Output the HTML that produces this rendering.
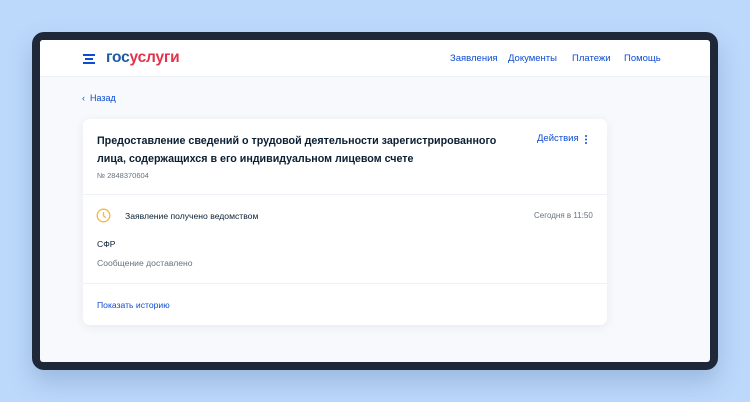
<!DOCTYPE html>
<html><head><meta charset="utf-8"><style>
*{margin:0;padding:0;box-sizing:border-box}
body{width:750px;height:402px;background:#bcd9fb;font-family:"Liberation Sans",sans-serif;position:relative;overflow:hidden}
.frame{position:absolute;left:32px;top:32px;width:686px;height:338px;background:#1f2838;border-radius:12px;box-shadow:0 12px 24px rgba(60,90,140,.25)}
.screen{position:absolute;left:40px;top:40px;width:670px;height:322px;background:#f7f9fc;border-radius:3px;overflow:hidden}
.hdr{height:37px;background:#fff;border-bottom:1px solid #eef1f6;position:relative}
.a{position:absolute;font-size:9.5px;color:#0d4cd3}
.card{position:absolute;left:43px;top:79px;width:524px;height:206px;background:#fff;border-radius:7px;box-shadow:0 2px 10px rgba(40,70,120,.08)}
.t{position:absolute;font-size:8.6px;color:#0b1f33}
</style></head><body>
<div class="frame"></div>
<div class="screen">
 <div class="hdr">
  <div style="position:absolute;left:43px;top:14px;width:12px;height:1.5px;background:#0d4cd3"></div>
  <div style="position:absolute;left:45px;top:18px;width:8px;height:1.5px;background:#0d4cd3"></div>
  <div style="position:absolute;left:43px;top:22px;width:12px;height:1.5px;background:#0d4cd3"></div>
  <div style="position:absolute;left:66px;top:9px;font-size:15.5px;font-weight:bold;letter-spacing:-0.2px"><span style="color:#1d5aa8">гос</span><span style="color:#e3324c">услуги</span></div>
  <span class="a" style="left:410px;top:13px">Заявления</span>
  <span class="a" style="left:468px;top:13px">Документы</span>
  <span class="a" style="left:532px;top:13px">Платежи</span>
  <span class="a" style="left:584px;top:13px">Помощь</span>
 </div>
 <span class="a" style="left:42px;top:53px;font-size:9px">‹&nbsp; Назад</span>
 <div class="card">
  <div style="position:absolute;left:14px;top:13px;font-size:10.7px;font-weight:bold;color:#0b1f33;line-height:18px;width:430px">Предоставление сведений о трудовой деятельности зарегистрированного лица, содержащихся в его индивидуальном лицевом счете</div>
  <span class="a" style="left:454px;top:14px;font-size:9.5px">Действия</span>
  <div style="position:absolute;left:502px;top:16px;width:2px;height:2px;background:#0d4cd3;border-radius:1px;box-shadow:0 3.5px 0 #0d4cd3,0 7px 0 #0d4cd3"></div>
  <span class="t" style="left:14px;top:52px;color:#66727f;font-size:7.5px">№ 2848370604</span>
  <div style="position:absolute;left:0;top:75px;width:524px;height:1px;background:#eef1f6"></div>
  <svg style="position:absolute;left:13px;top:89px" width="15" height="15" viewBox="0 0 15 15"><circle cx="7.5" cy="7.5" r="6.3" fill="none" stroke="#f4b73c" stroke-width="1.3"/><path d="M7.5 4v3.8l2.3 1.8" fill="none" stroke="#f4b73c" stroke-width="1.3"/></svg>
  <span class="t" style="left:42px;top:92px">Заявление получено ведомством</span>
  <span class="t" style="left:451px;top:92px;color:#66727f;font-size:8px">Сегодня в 11:50</span>
  <span class="t" style="left:14px;top:120px">СФР</span>
  <span class="t" style="left:14px;top:139px;color:#66727f">Сообщение доставлено</span>
  <div style="position:absolute;left:0;top:164px;width:524px;height:1px;background:#eef1f6"></div>
  <span class="a" style="left:14px;top:181px;font-size:8.6px">Показать историю</span>
 </div>
</div>
</body></html>
